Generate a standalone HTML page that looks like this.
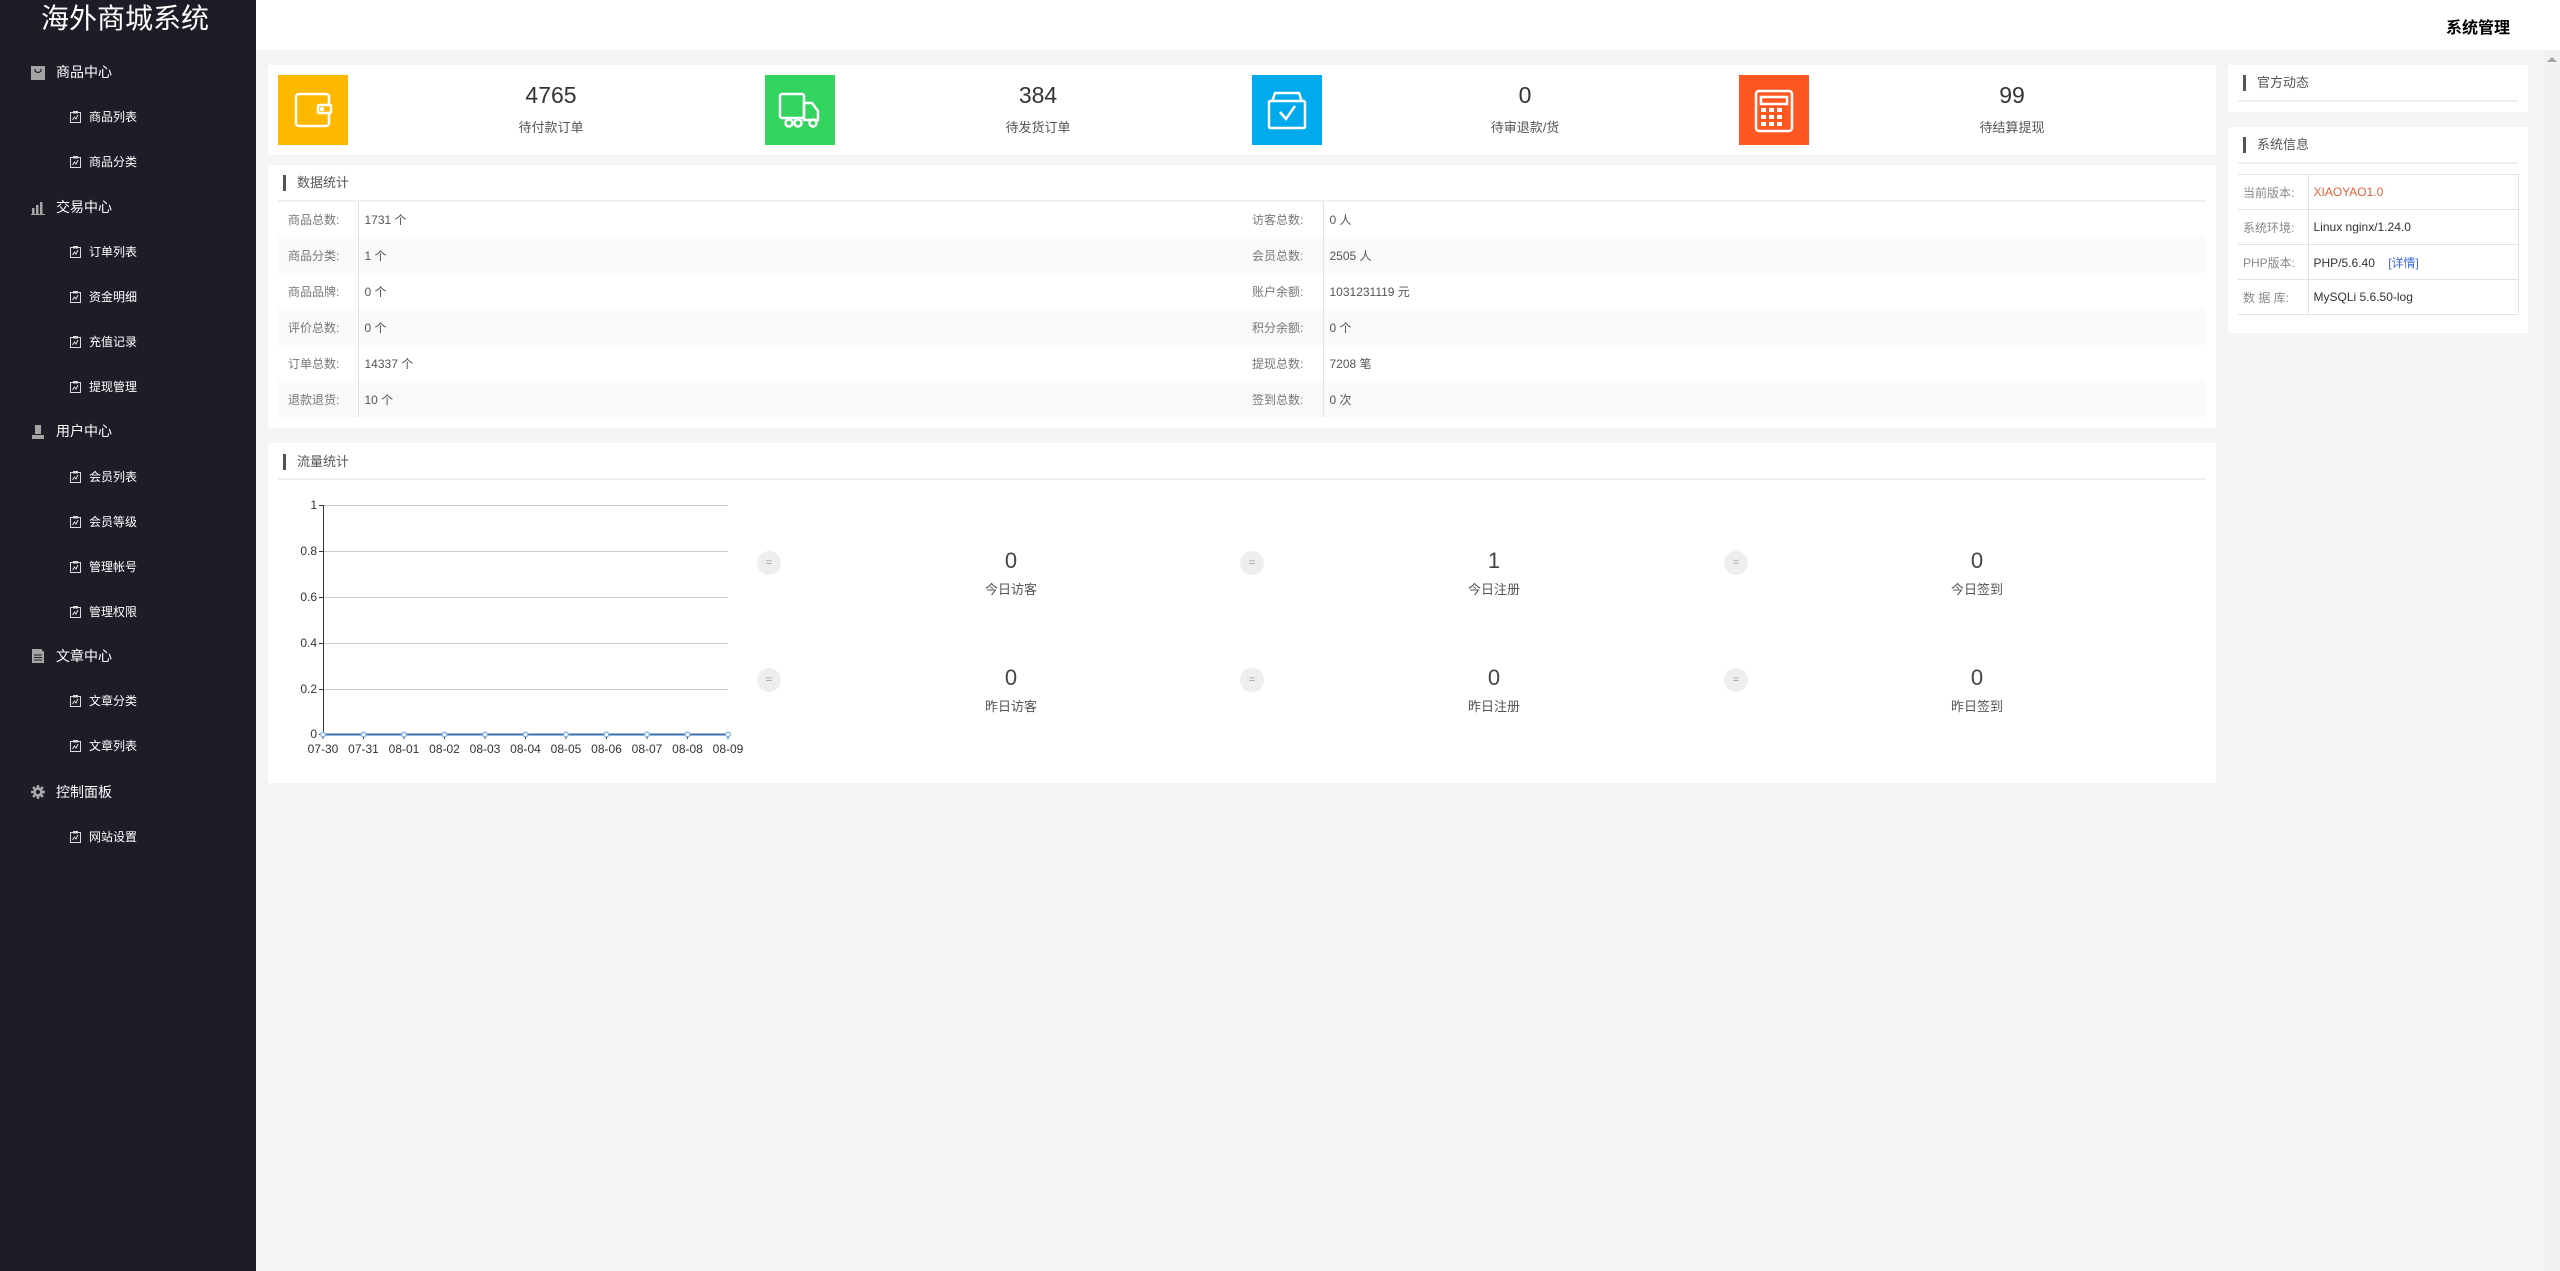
<!DOCTYPE html>
<html><head><meta charset="utf-8">
<style>
*{margin:0;padding:0;box-sizing:border-box}
body{width:2560px;height:1271px;overflow:hidden;background:#f5f5f5;font-family:"Liberation Sans","Noto Sans CJK SC",sans-serif;position:relative;color:#333}
.abs{position:absolute}
#side{left:0;top:0;width:256px;height:1271px;background:#1c1d27}
#side .title{position:absolute;left:0;width:250px;top:0;height:38px;line-height:38px;text-align:center;color:#fff;font-size:28px}
.grp{position:absolute;left:56px;color:#fff;font-size:14px;line-height:20px}
.gi{position:absolute;left:31px;width:14px;height:14px}
.sub{position:absolute;left:89px;color:#fff;font-size:12px;line-height:18px}
.si{position:absolute;left:70px;width:11px;height:12px}
#head{left:256px;top:0;width:2304px;height:50px;background:#fff}
#head span{position:absolute;right:50px;top:14px;font-size:16px;font-weight:bold;color:#000}
.card{position:absolute;background:#fff}
.ico{position:absolute;width:70px;height:70px;top:10px}
.num{position:absolute;width:300px;text-align:center;font-size:23px;color:#333;top:17px}
.lab{position:absolute;width:300px;text-align:center;font-size:13px;color:#555;top:52px}
.ttl{position:absolute;left:15px;font-size:13px;color:#555;padding-left:14px;height:16px;line-height:16px}
.ttl:before{content:"";position:absolute;left:0;top:0;width:3px;height:16px;background:#555}
.hr{position:absolute;height:2px;background:#f0f0f0}
table.d{position:absolute;left:10px;top:36px;width:1928px;border-collapse:collapse;font-size:12px}
table.d td{height:36px;padding:0 6px;color:#555}
table.d td.l{color:#777;padding-left:10px}
table.d td.b{border-left:1px solid #e2e2e2}
table.d tr:nth-child(even) td{background:#f8f9fb}
table.s{position:absolute;left:10px;top:47px;width:281px;border-collapse:collapse;font-size:12px}
table.s td{border:1px solid #e2e2e2;height:35px;padding:0 5px;color:#333}
table.s td.l{color:#888;width:70px;border-left:none}
.circ{position:absolute;width:24px;height:24px;border-radius:50%;background:#eee;color:#999;font-size:11px;text-align:center;line-height:24px}
.fn{position:absolute;width:200px;text-align:center;font-size:22px;color:#444}
.fl{position:absolute;width:200px;text-align:center;font-size:13px;color:#555}
</style></head><body>
<div id="side" class="abs">
<div class="title">海外商城系统</div>
<!-- groups -->
<svg class="gi" style="top:66px" viewBox="0 0 14 14"><rect width="14" height="14" fill="#a5a5a5"/><path d="M4 3v2q3 3 6 0V3" stroke="#1c1d27" stroke-width="1.2" fill="none"/></svg>
<div class="grp" style="top:62px">商品中心</div>
<svg class="gi" style="top:201px" viewBox="0 0 14 14" fill="#a5a5a5"><rect x="1" y="7" width="2.5" height="6"/><rect x="5" y="4" width="2.5" height="9"/><rect x="9" y="1" width="2.5" height="12"/><rect x="0" y="13" width="14" height="1"/></svg>
<div class="grp" style="top:197px">交易中心</div>
<svg class="gi" style="top:425px" viewBox="0 0 14 14" fill="#a5a5a5"><rect x="4" y="0" width="6" height="9"/><rect x="1" y="10" width="12" height="4"/></svg>
<div class="grp" style="top:421px">用户中心</div>
<svg class="gi" style="top:649px" viewBox="0 0 14 14" fill="#a5a5a5"><path d="M1 0h9l3 3v11H1z"/><path d="M3 6h8M3 8.5h8M3 11h8" stroke="#1c1d27"/></svg>
<div class="grp" style="top:646px">文章中心</div>
<svg class="gi" style="top:785px" viewBox="0 0 14 14"><circle cx="7" cy="7" r="5" fill="#a5a5a5"/><path d="M7 0v14M0 7h14M2 2l10 10M12 2L2 12" stroke="#a5a5a5" stroke-width="2.4"/><circle cx="7" cy="7" r="2" fill="#1c1d27"/></svg>
<div class="grp" style="top:782px">控制面板</div>
<!-- subs -->
<div id="subs"></div>
</div>
<script>
var subs=[["商品列表",117],["商品分类",162],["订单列表",252],["资金明细",297],["充值记录",342],["提现管理",387],["会员列表",477],["会员等级",522],["管理帐号",567],["管理权限",612],["文章分类",701],["文章列表",746],["网站设置",837]];
var h="";subs.forEach(function(s){h+='<svg class="si" style="top:'+(s[1]-6)+'px" viewBox="0 0 11 12"><rect x="0.5" y="1.5" width="10" height="10" fill="none" stroke="#ddd"/><rect x="3" y="0" width="5" height="2.5" fill="#ddd"/><path d="M2.5 9l2-3 1.5 2 2-4" stroke="#ddd" fill="none"/></svg><div class="sub" style="top:'+(s[1]-9)+'px">'+s[0]+'</div>';});
document.getElementById("subs").innerHTML=h;
</script>
<div id="head" class="abs"><span>系统管理</span></div>
<!-- scrollbar -->
<div class="abs" style="left:2543px;top:50px;width:17px;height:1221px;background:#f1f1f1"></div>
<div class="abs" style="left:2547px;top:57px;width:0;height:0;border-left:5px solid transparent;border-right:5px solid transparent;border-bottom:5px solid #a3a3a3"></div>

<!-- stat card -->
<div class="card" style="left:268px;top:65px;width:1948px;height:90px">
 <div class="ico" style="left:10px;background:#ffb800"><svg width="70" height="70" viewBox="0 0 70 70" fill="none" stroke="#fff" stroke-width="2.5"><path d="M51 31v-9a3 3 0 0 0-3-3H21a3 3 0 0 0-3 3v26a3 3 0 0 0 3 3h27a3 3 0 0 0 3-3v-9"/><rect x="40" y="30" width="13" height="8" rx="1"/><circle cx="44" cy="34" r="1" fill="#fff"/></svg></div>
 <div class="num" style="left:133px">4765</div><div class="lab" style="left:133px">待付款订单</div>
 <div class="ico" style="left:497px;background:#33d35f"><svg width="70" height="70" viewBox="0 0 70 70" fill="none" stroke="#fff" stroke-width="2.5"><rect x="15" y="19" width="24" height="24" rx="2"/><path d="M39 28h8l6 8v9H39z"/><circle cx="24" cy="48" r="3.5"/><circle cx="33" cy="48" r="3.5"/><circle cx="48" cy="48" r="3.5"/></svg></div>
 <div class="num" style="left:620px">384</div><div class="lab" style="left:620px">待发货订单</div>
 <div class="ico" style="left:984px;background:#01aaed"><svg width="70" height="70" viewBox="0 0 70 70" fill="none" stroke="#fff" stroke-width="2.5"><path d="M20 27l3-9h24l3 9"/><rect x="17" y="26" width="36" height="27" rx="1.5"/><path d="M28 37l6 7 9-13"/></svg></div>
 <div class="num" style="left:1107px">0</div><div class="lab" style="left:1107px">待审退款/货</div>
 <div class="ico" style="left:1471px;background:#ff5722"><svg width="70" height="70" viewBox="0 0 70 70" fill="none" stroke="#fff" stroke-width="2.5"><rect x="17" y="16" width="36" height="40" rx="3"/><rect x="22" y="22" width="26" height="7"/><g fill="#fff" stroke="none"><rect x="22" y="33" width="5" height="4"/><rect x="30" y="33" width="5" height="4"/><rect x="38" y="33" width="5" height="4"/><rect x="22" y="40" width="5" height="4"/><rect x="30" y="40" width="5" height="4"/><rect x="38" y="40" width="5" height="4"/><rect x="22" y="47" width="5" height="4"/><rect x="30" y="47" width="5" height="4"/><rect x="38" y="47" width="5" height="4"/></g></svg></div>
 <div class="num" style="left:1594px">99</div><div class="lab" style="left:1594px">待结算提现</div>
</div>

<!-- data stats -->
<div class="card" style="left:268px;top:165px;width:1948px;height:263px">
 <div class="ttl" style="top:10px">数据统计</div>
 <div class="hr" style="left:10px;top:35px;width:1928px"></div>
 <table class="d">
 <colgroup><col style="width:80px"><col style="width:884px"><col style="width:81px"><col></colgroup>
 <tr><td class="l">商品总数:</td><td class="b">1731 个</td><td class="l">访客总数:</td><td class="b">0 人</td></tr>
 <tr><td class="l">商品分类:</td><td class="b">1 个</td><td class="l">会员总数:</td><td class="b">2505 人</td></tr>
 <tr><td class="l">商品品牌:</td><td class="b">0 个</td><td class="l">账户余额:</td><td class="b">1031231119 元</td></tr>
 <tr><td class="l">评价总数:</td><td class="b">0 个</td><td class="l">积分余额:</td><td class="b">0 个</td></tr>
 <tr><td class="l">订单总数:</td><td class="b">14337 个</td><td class="l">提现总数:</td><td class="b">7208 笔</td></tr>
 <tr><td class="l">退款退货:</td><td class="b">10 个</td><td class="l">签到总数:</td><td class="b">0 次</td></tr>
 </table>
</div>

<!-- flow -->
<div class="card" style="left:268px;top:443px;width:1948px;height:340px">
 <div class="ttl" style="top:11px">流量统计</div>
 <div class="hr" style="left:10px;top:35px;width:1928px"></div>
</div>
<svg class="abs" style="left:290px;top:495px" width="470" height="270" font-family="Liberation Sans" font-size="12" fill="#333">
 <g stroke="#ccc" stroke-width="1">
  <line x1="33" y1="10.5" x2="438" y2="10.5"/><line x1="33" y1="56.5" x2="438" y2="56.5"/><line x1="33" y1="102.5" x2="438" y2="102.5"/><line x1="33" y1="148.5" x2="438" y2="148.5"/><line x1="33" y1="194.5" x2="438" y2="194.5"/>
 </g>
 <line x1="33.5" y1="10" x2="33.5" y2="239" stroke="#333"/>
 <g stroke="#333"><line x1="29" y1="10.5" x2="33" y2="10.5"/><line x1="29" y1="56.5" x2="33" y2="56.5"/><line x1="29" y1="102.5" x2="33" y2="102.5"/><line x1="29" y1="148.5" x2="33" y2="148.5"/><line x1="29" y1="194.5" x2="33" y2="194.5"/><line x1="29" y1="239.5" x2="33" y2="239.5"/></g>
 <g text-anchor="end"><text x="27" y="14">1</text><text x="27" y="60">0.8</text><text x="27" y="106">0.6</text><text x="27" y="152">0.4</text><text x="27" y="198">0.2</text><text x="27" y="243">0</text></g>
 <line x1="33" y1="239.5" x2="438" y2="239.5" stroke="#3a6fb0" stroke-width="2"/>
 <g id="pts"></g>
</svg>
<script>
var g=document.getElementById("pts"),lb=["07-30","07-31","08-01","08-02","08-03","08-04","08-05","08-06","08-07","08-08","08-09"],s="";
for(var i=0;i<11;i++){var x=33+i*40.5;s+='<line x1="'+x+'" y1="239" x2="'+x+'" y2="244" stroke="#333"/><circle cx="'+x+'" cy="239.5" r="2.3" fill="#fff" stroke="#7fb3e6" stroke-width="1.3"/><text x="'+x+'" y="258" text-anchor="middle">'+lb[i]+'</text>';}
g.innerHTML=s;
</script>
<div id="fs"></div>
<script>
var d=[[769,1011,"0","今日访客",563],[1252,1494,"1","今日注册",563],[1736,1977,"0","今日签到",563],[769,1011,"0","昨日访客",680],[1252,1494,"0","昨日注册",680],[1736,1977,"0","昨日签到",680]],h2="";
d.forEach(function(a){h2+='<div class="circ" style="left:'+(a[0]-12)+'px;top:'+(a[4]-12)+'px">=</div><div class="fn" style="left:'+(a[1]-100)+'px;top:'+(a[4]-15)+'px">'+a[2]+'</div><div class="fl" style="left:'+(a[1]-100)+'px;top:'+(a[4]+16)+'px">'+a[3]+'</div>';});
document.getElementById("fs").innerHTML=h2;
</script>

<!-- right -->
<div class="card" style="left:2228px;top:65px;width:300px;height:47px">
 <div class="ttl" style="top:10px;font-size:13px">官方动态</div>
 <div class="hr" style="left:10px;top:35px;width:280px"></div>
</div>
<div class="card" style="left:2228px;top:127px;width:300px;height:206px">
 <div class="ttl" style="top:10px;font-size:13px">系统信息</div>
 <div class="hr" style="left:10px;top:35px;width:280px"></div>
 <table class="s">
 <tr><td class="l">当前版本:</td><td style="color:#e5603b">XIAOYAO1.0</td></tr>
 <tr><td class="l">系统环境:</td><td>Linux nginx/1.24.0</td></tr>
 <tr><td class="l">PHP版本:</td><td>PHP/5.6.40 &nbsp;&nbsp;&nbsp;<span style="color:#3f6ad8">[详情]</span></td></tr>
 <tr><td class="l">数 据 库:</td><td>MySQLi 5.6.50-log</td></tr>
 </table>
</div>
</body></html>
